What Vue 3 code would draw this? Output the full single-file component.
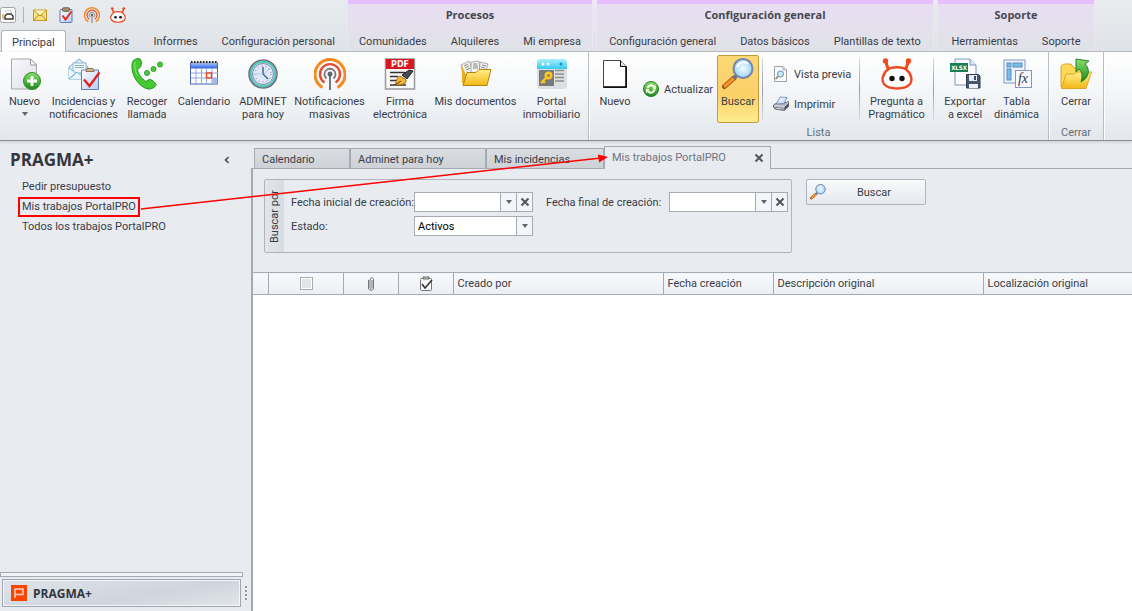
<script setup>
import { ref } from 'vue'

const quick = [
  { icon: 'mail', label: 'Correo' },
  { icon: 'clip', label: 'Tareas' },
  { icon: 'waves', label: 'Notificaciones' },
  { icon: 'robot', label: 'Pragmático' }
]
const mainTabs = ['Principal', 'Impuestos', 'Informes', 'Configuración personal']
const groups = [
  { title: 'Procesos', cls: 'g-proc', tabs: ['Comunidades', 'Alquileres', 'Mi empresa'] },
  { title: 'Configuración general', cls: 'g-conf', tabs: ['Configuración general', 'Datos básicos', 'Plantillas de texto'] },
  { title: 'Soporte', cls: 'g-sop', tabs: ['Herramientas', 'Soporte'] }
]
const mainItems = [
  { icon: 'newdoc', lines: ['Nuevo'], drop: true },
  { icon: 'incid', lines: ['Incidencias y', 'notificaciones'] },
  { icon: 'phone', lines: ['Recoger', 'llamada'] },
  { icon: 'calendar', lines: ['Calendario'] },
  { icon: 'clock', lines: ['ADMINET', 'para hoy'] },
  { icon: 'waves', lines: ['Notificaciones', 'masivas'] },
  { icon: 'pdf', lines: ['Firma', 'electrónica'], mark: 'PDF' },
  { icon: 'docs', lines: ['Mis documentos'] },
  { icon: 'portal', lines: ['Portal', 'inmobiliario'] }
]
const links = ['Pedir presupuesto', 'Mis trabajos PortalPRO', 'Todos los trabajos PortalPRO']
const docTabs = ['Calendario', 'Adminet para hoy', 'Mis incidencias']
const from = ref('')
const to = ref('')
const state = ref('Activos')
</script>

<template>
  <div class="app">
    <svg class="sprite" width="0" height="0" aria-hidden="true">
      <defs>
        <linearGradient id="gGreen" x1="0" y1="0" x2="0" y2="1"><stop offset="0" stop-color="#8ede6a" /><stop offset="1" stop-color="#178a1c" /></linearGradient>
        <linearGradient id="gPaper" x1="0" y1="0" x2="1" y2="1"><stop offset="0" stop-color="#f8f8fc" /><stop offset="1" stop-color="#dfe0ea" /></linearGradient>
        <linearGradient id="gFolder" x1="0" y1="0" x2="0" y2="1"><stop offset="0" stop-color="#fff08a" /><stop offset="1" stop-color="#f3b816" /></linearGradient>
        <linearGradient id="gBlue" x1="0" y1="0" x2="0" y2="1"><stop offset="0" stop-color="#8fb4ff" /><stop offset="1" stop-color="#2f5fd8" /></linearGradient>
        <linearGradient id="gCyan" x1="0" y1="0" x2="0" y2="1"><stop offset="0" stop-color="#a6f2fb" /><stop offset="1" stop-color="#36c8f2" /></linearGradient>
        <linearGradient id="gSky" x1="0" y1="0" x2="1" y2="1"><stop offset="0" stop-color="#fff" /><stop offset="1" stop-color="#b5ccf4" /></linearGradient>
        <radialGradient id="gLens"><stop offset="0" stop-color="#f2fcff" /><stop offset="1" stop-color="#9fd4f5" /></radialGradient>
      </defs>
      <symbol id="user" viewBox="0 0 16 16">
        <rect x="0.5" y="0.5" width="15" height="15" rx="2" fill="#fafafa" stroke="#a2a6ac" />
        <path d="M5 12V9l2-2h4l2 2v3z" fill="#fff" stroke="#383838" stroke-width="1.4" />
        <path d="M5 4l1 1M8 3v1M11 3l-1 1M12 5l-1 1" stroke="#999" fill="none" />
        <path d="M3 7v5" stroke="#f0aa33" stroke-width="1.500" />
      </symbol>
      <symbol id="mail" viewBox="0 0 16 16">
        <rect x="1.500" y="3" width="13" height="10.500" fill="#fbe27a" stroke="#c9992c" />
        <path d="M2 3.500l6 5.500 6-5.500M2 13l4.500-5M14 13l-4.500-5" fill="none" stroke="#b98a26" />
        <path d="M2.500 3.500h11L8 8z" fill="#fff6c0" />
      </symbol>
      <symbol id="clip" viewBox="0 0 16 16">
        <rect x="2" y="2.500" width="12" height="13" rx="1" fill="url(#gSky)" stroke="#5d78ad" />
        <rect x="4.500" y="0.800" width="7" height="3.500" rx="1" fill="#a98d63" stroke="#6d6250" />
        <path d="M4.500 8.500l3 4 6-8" fill="none" stroke="#e02a1d" stroke-width="2" />
      </symbol>
      <symbol id="waves" viewBox="0 0 32 32">
        <g fill="none" stroke-linecap="butt">
          <path d="M8.500 29.500A15 15 0 1 1 23.500 29.500" stroke="#f68a1f" stroke-width="3" />
          <path d="M10.500 24.500A10 10 0 1 1 21.500 24.500" stroke="#e4502f" stroke-width="2.400" />
          <path d="M12.500 20.500A5.500 5.500 0 1 1 19.500 20.500" stroke="#777" stroke-width="1.800" />
          <path d="M16 17v15" stroke="#777" stroke-width="2" />
        </g>
        <circle cx="16" cy="16" r="2.500" fill="#666" />
      </symbol>
      <symbol id="robot" viewBox="0 0 32 32">
        <path d="M7 11.500C10 8.500 22 8.500 25 11.500C30 15 32 22 29 26C26 29.500 21 30.500 16 30.500S6 29.500 3 26C0 22 2 15 7 11.500z" fill="#fff" stroke="#ee4a20" stroke-width="2.400" />
        <path d="M7.500 12L4.500 3M24.500 12L27.500 3" stroke="#ee4a20" stroke-width="3" />
        <circle cx="4.500" cy="3" r="2.700" fill="#ee4a20" /><circle cx="27.500" cy="3" r="2.700" fill="#ee4a20" />
        <circle cx="11" cy="20.500" r="2.700" fill="#111" /><circle cx="21" cy="20.500" r="2.700" fill="#111" />
      </symbol>
      <symbol id="newdoc" viewBox="0 0 32 32">
        <path d="M2.500 1h19l6 6v24h-25z" fill="url(#gPaper)" stroke="#a9a9a9" />
        <path d="M21.500 1v6h6z" fill="#fff" stroke="#999" />
        <circle cx="23" cy="23" r="8.500" fill="url(#gGreen)" stroke="#2f8b29" />
        <path d="M23 18v10M18 23h10" stroke="#fff" stroke-width="2.800" />
      </symbol>
      <symbol id="incid" viewBox="0 0 32 32">
        <path d="M1 9l10-8 9 8v12H1z" fill="#d8effb" stroke="#77afd0" />
        <rect x="5" y="5" width="13" height="10" fill="#f4f8fb" stroke="#93b5c8" />
        <path d="M7 7.500h9M7 9.500h9" stroke="#8aacb8" />
        <path d="M1 10l7 5-7 6M20 10l-7 5M1 21l8-7 8 7" fill="#e9f8ff" stroke="#77b5d8" />
        <path d="M13.500 12h17v19.500h-17z" fill="url(#gSky)" stroke="#5f7fc0" />
        <path d="M18 13.500l1-3h6l1 3z" fill="#d6b787" stroke="#8d7350" />
        <path d="M16 21.500l5.500 6.500L31.500 14.500" fill="none" stroke="#e3231b" stroke-width="2.400" />
      </symbol>
      <symbol id="phone" viewBox="0 0 32 32">
        <path d="M3 2C5 0.500 8 0 9 1C11 3 10.500 7 9.500 9L6.500 11.500C7 16 11 21 15 23.500L18 21.500C20 21 24.500 24.500 25 26.500C25 29 20 31.500 17 31C8 29 .5 18 1 8C1.200 5 1.500 3 3 2z" fill="#43ca31" stroke="#28912a" />
        <path d="M4 4c-1 6 1 11 3 14" stroke="#83ec70" fill="none" />
        <g fill="#48c935" stroke="#238c2a" stroke-width=".7"><circle cx="16" cy="15" r="2.600" /><circle cx="22.500" cy="11" r="2.600" /><circle cx="29" cy="6.500" r="2.600" /></g>
      </symbol>
      <symbol id="calendar" viewBox="0 0 32 32">
        <rect x="2.500" y="5" width="27" height="21" fill="#fff" stroke="#4262ae" />
        <rect x="3" y="6" width="26" height="4.500" fill="url(#gBlue)" />
        <path d="M3 4h27" stroke="#252525" stroke-width="2" stroke-dasharray="1.500 1.500" />
        <path d="M3 15h27M3 20h27M8 10v16M13.500 10v16M18.500 10v16M24 10v16" stroke="#8ba9e4" />
        <path d="M24.500 20h5v6h-5z" fill="#9db9ed" />
        <rect x="18.500" y="15" width="5" height="5" fill="#fff" stroke="#f04a20" stroke-width="1.500" />
      </symbol>
      <symbol id="clock" viewBox="0 0 32 32">
        <circle cx="16" cy="16" r="13.500" fill="#dbeafd" stroke="#716688" stroke-width="2.500" />
        <circle cx="16" cy="16" r="12.300" fill="none" stroke="#56c6ad" stroke-width="2.200" />
        <circle cx="16" cy="16" r="10.500" fill="none" stroke="#7d87b0" />
        <circle cx="16" cy="16" r="8" fill="none" stroke="#bd4c77" stroke-dasharray="1 3" />
        <path d="M16 9v7l5 5" fill="none" stroke="#4c5887" stroke-width="1.400" /><path d="M16 16h-7M23 10l-6 6" stroke="#b8c5dc" />
      </symbol>
      <symbol id="pdf" viewBox="0 0 32 32">
        <rect x="1.500" y="1" width="29" height="30" fill="#fafafa" stroke="#999" stroke-width="1.500" />
        <rect x="2" y="1" width="28" height="10" fill="#d9161f" />
        <path d="M6 14.500h15M6 18.500h8M6 22.500h6M6 27h16" stroke="#333" stroke-width="1.400" />
        <path d="M11 27c2-4 1-7 5-9l6 4c0 5-5 5-11 5z" fill="#f6b735" stroke="#9b651a" />
        <path d="M18 17l7-5 4 1-6 8z" fill="#4b4b50" stroke="#252525" /><path d="M11 27l6-4" stroke="#553c10" />
      </symbol>
      <symbol id="docs" viewBox="0 0 32 32">
        <path d="M2 8h8l2 3h15v12H3z" fill="#e0a51c" stroke="#a17414" />
        <g fill="#f1f1ef" stroke="#999" stroke-width=".8"><path d="M1 7l8-4 6 15-10 3z" /><path d="M11 4l8-1 1 14h-9z" /><path d="M20 4l8 2-4 14-5-2z" /></g>
        <path d="M4 8l4-2M5 10l4-2M6 12l4-2M13 6h4M13 8h5M13 10h5M22 7l4 1M21 9l4 1" stroke="#888" />
        <path d="M2 8v17l2 1 2-9z" fill="#e9ad21" />
        <path d="M7 14.500h9l3-3h12l-4 16H3z" fill="url(#gFolder)" stroke="#b58212" />
      </symbol>
      <symbol id="portal" viewBox="0 0 32 32">
        <rect x="1" y="1" width="30" height="30" rx="4" fill="#dedfe0" />
        <path d="M1 11V5a4 4 0 0 1 4-4h22a4 4 0 0 1 4 4v6z" fill="url(#gCyan)" />
        <g fill="#fff"><circle cx="7" cy="6" r="1.500" /><circle cx="12" cy="6" r="1.500" /></g><circle cx="25" cy="6" r="1.500" fill="#168fc2" />
        <rect x="3" y="12" width="15" height="16" fill="#777a7d" />
        <circle cx="12.500" cy="17.500" r="2.700" fill="none" stroke="#ffc51d" stroke-width="2.700" /><path d="M10 20l-5 5M7 23l2 2" stroke="#ffc51d" stroke-width="2.300" />
        <path d="M19 12.500h9M19 16h9M19 19.500h9M19 23h9" stroke="#8b8d90" stroke-width="1.300" />
      </symbol>
      <symbol id="blank" viewBox="0 0 32 32">
        <path d="M4.500 2.500h17l6 6v21h-23z" fill="#fff" stroke="#444" /><path d="M27 8.500v20.500h-22.500" fill="none" stroke="#000" stroke-width="1.500" /><path d="M21.500 2.500v6h6" fill="#ddd" stroke="#000" />
      </symbol>
      <symbol id="refresh" viewBox="0 0 16 16">
        <circle cx="8" cy="8" r="7.500" fill="url(#gGreen)" stroke="#247a2a" />
        <path d="M3.500 7c1-4 6-5 8-2l1.500-1v4.500H9L10.500 7C9 5 7 5 6 7zM12.500 9c-1 4-6 5-8 2L3 12V7.800h4L5.500 9c1.500 2 3.500 2 4.500 0z" fill="#f3ffe0" />
      </symbol>
      <symbol id="search" viewBox="0 0 32 32">
        <path d="M2.500 28.500L12 20" stroke="#8b4c1b" stroke-width="5" stroke-linecap="round" /><path d="M3 28L11.500 20.500" stroke="#f99328" stroke-width="3.400" stroke-linecap="round" />
        <path d="M11.500 20.500l3.500-3.500" stroke="#6d7684" stroke-width="3.500" />
        <circle cx="21" cy="10.500" r="9.500" fill="url(#gLens)" stroke="#7486ac" stroke-width="2" />
        <path d="M15 9c2-5 8-6 11-3" fill="none" stroke="#fff" stroke-width="2" />
      </symbol>
      <symbol id="preview" viewBox="0 0 16 16">
        <path d="M1.500 .5h8.500l3.500 3.500v11.500h-12z" fill="#fafbfc" stroke="#a1a1a1" /><path d="M10 .5V4h3.500" fill="none" stroke="#aaa" />
        <path d="M2.500 13l3-3" stroke="#90775c" stroke-width="1.500" /><circle cx="7.500" cy="8" r="3" fill="#c9ecfc" stroke="#708cae" />
      </symbol>
      <symbol id="printer" viewBox="0 0 16 16">
        <path d="M.5 9l4-2.500h9l2-1v4.500l-4 4.500L2 13 .5 11.500z" fill="#a6acb5" stroke="#50565e" stroke-width=".8" />
        <path d="M7 1l7 .5-3 6-7.500.5z" fill="url(#gSky)" stroke="#6681ad" stroke-width=".8" /><path d="M1.500 9.500l10 1 3.500-4" fill="none" stroke="#e8eaee" /><path d="M11.500 11v3.500l4-4V7z" fill="#4c5159" /><path d="M3 11.500l6 .5-1 1.500-5-.5z" fill="#f7fafc" stroke="#555" stroke-width=".5" />
      </symbol>
      <symbol id="excel" viewBox="0 0 32 32">
        <path d="M6 1h15l6 6v20H6z" fill="#fbfcff" stroke="#7f93c2" /><path d="M21 1v6h6" fill="#e3e9fa" stroke="#7f93c2" />
        <rect x="1" y="5" width="18" height="9" fill="#168057" />
        <path d="M17.500 16.500h12l1.500 1.500v12H17.500z" fill="#495970" stroke="#303b50" /><rect x="20" y="17" width="8" height="6" fill="#e4ebf3" /><rect x="25" y="18" width="2" height="4" fill="#394766" /><rect x="20" y="26" width="9" height="4" fill="#eff3f7" />
      </symbol>
      <symbol id="pivot" viewBox="0 0 32 32">
        <rect x="3" y="2" width="21" height="23" fill="#eff4fd" stroke="#8296bf" />
        <rect x="6" y="5" width="4" height="4" fill="#79bee7" stroke="#568dbd" /><rect x="12" y="5" width="9" height="4" fill="#79bee7" stroke="#568dbd" /><rect x="6" y="11" width="4" height="11" fill="#79bee7" stroke="#568dbd" />
        <rect x="14.500" y="12.500" width="16" height="17" fill="#f8faff" stroke="#8296bf" />
      </symbol>
      <symbol id="close" viewBox="0 0 32 32">
        <path d="M1 29V10c0-3 2-4 4-4h6l3 4h11v19z" fill="#ffd955" stroke="#d9a52c" /><path d="M6 16h9l2-2h14.500L26 30.500H1.500z" fill="url(#gFolder)" stroke="#e0a526" />
        <path d="M16 1l13 2-4 3c5 5 5 13-4 18c2-6 1-10-2-13l-3 3z" fill="url(#gGreen)" stroke="#278023" />
      </symbol>
      <symbol id="paperclip" viewBox="0 0 16 16">
        <path d="M5.500 4v8c0 3 5 3 5 0V4c0-3-3.500-3-3.500 0v7c0 2 2 2 2 0V4" fill="none" stroke="#70757c" />
      </symbol>
      <symbol id="task" viewBox="0 0 16 16">
        <rect x="2.500" y="2.500" width="11" height="12" rx="1" fill="#fafafa" stroke="#73777b" /><path d="M5 3V1h6v2z" fill="#ccc" stroke="#666" /><path d="M4 8l3 4 7-8" fill="none" stroke="#333" stroke-width="1.600" />
      </symbol>
      <symbol id="cross" viewBox="0 0 10 10"><path d="M1.500 1.500l7 7M8.500 1.500l-7 7" fill="none" stroke="#50565e" stroke-width="2" /></symbol>
      <symbol id="down" viewBox="0 0 8 8"><path d="M1 2h6L4 6z" fill="#5e646d" /></symbol>
    </svg>

    <header class="top">
      <div class="main-head">
        <div class="quick">
          <button type="button" class="q user" aria-label="Usuario"><svg><use href="#user" /></svg></button>
          <button v-for="q in quick" :key="q.icon" type="button" class="q" :aria-label="q.label"><svg><use :href="'#' + q.icon" /></svg></button>
        </div>
        <nav class="tabs">
          <button v-for="(t, i) in mainTabs" :key="t" type="button" class="tab" :class="{ on: i === 0 }">{{ t }}</button>
        </nav>
      </div>
      <div v-for="g in groups" :key="g.title" class="ctx" :class="g.cls">
        <strong>{{ g.title }}</strong>
        <nav class="tabs"><button v-for="t in g.tabs" :key="t" type="button" class="tab">{{ t }}</button></nav>
      </div>
    </header>

    <section class="ribbon">
      <div class="rgroup first">
        <button v-for="it in mainItems" :key="it.icon" type="button" class="big">
          <svg><use :href="'#' + it.icon" /><text v-if="it.mark" class="pdf-mark" x="16" y="9" text-anchor="middle">{{ it.mark }}</text></svg>
          <span v-for="l in it.lines" :key="l">{{ l }}</span>
          <svg v-if="it.drop" class="dd"><use href="#down" /></svg>
        </button>
      </div>
      <div class="rgroup lista">
        <div class="ritems">
          <button type="button" class="big"><svg><use href="#blank" /></svg><span>Nuevo</span></button>
          <button type="button" class="small refresh"><svg><use href="#refresh" /></svg>Actualizar</button>
          <button type="button" class="big hot"><svg><use href="#search" /></svg><span>Buscar</span></button>
          <i class="sep"></i>
          <div class="stack">
            <button type="button" class="small"><svg><use href="#preview" /></svg>Vista previa</button>
            <button type="button" class="small"><svg><use href="#printer" /></svg>Imprimir</button>
          </div>
          <i class="sep"></i>
          <button type="button" class="big"><svg><use href="#robot" /></svg><span>Pregunta a</span><span>Pragmático</span></button>
          <i class="sep"></i>
          <button type="button" class="big"><svg><use href="#excel" /><text class="xls-mark" x="10" y="12" text-anchor="middle">XLSX</text></svg><span>Exportar</span><span>a excel</span></button>
          <button type="button" class="big"><svg><use href="#pivot" /><text class="fx-mark" x="22" y="25" text-anchor="middle">fx</text></svg><span>Tabla</span><span>dinámica</span></button>
        </div>
        <div class="caption">Lista</div>
      </div>
      <div class="rgroup cerrar">
        <button type="button" class="big"><svg><use href="#close" /></svg><span>Cerrar</span></button>
        <div class="caption">Cerrar</div>
      </div>
    </section>

    <div class="body">
      <aside>
        <div class="side-head">
          <h1>PRAGMA+</h1>
          <button type="button" class="fold" aria-label="Contraer"><svg viewBox="0 0 8 8"><path d="M5.500 1L2.500 4l3 3" /></svg></button>
        </div>
        <nav class="links"><a v-for="(l, i) in links" :key="l" href="#" :class="{ boxed: i === 1 }">{{ l }}</a></nav>
        <div class="splitter"></div>
        <div class="side-foot">
          <button type="button" class="module">
            <svg viewBox="0 0 16 16"><rect width="16" height="16" fill="#fb4400" /><path d="M4 13V4h8v5.500H4" fill="none" stroke="#ffd5c4" stroke-width="1.500" /></svg>
            PRAGMA+
          </button>
          <div class="grip"><i></i><i></i><i></i><i></i></div>
        </div>
      </aside>

      <main>
        <nav class="doctabs">
          <button v-for="(t, i) in docTabs" :key="t" type="button" class="dtab" :class="'d' + i">{{ t }}</button>
          <div class="dtab active"><span>Mis trabajos PortalPRO</span><button type="button" aria-label="Cerrar pestaña"><svg><use href="#cross" /></svg></button></div>
        </nav>
        <div class="work">
          <div class="filters">
            <section class="panel">
              <div class="strip"><span>Buscar por</span></div>
              <form class="fields" @submit.prevent>
                <label for="from">Fecha inicial de creación:</label>
                <div class="combo"><input id="from" v-model="from" type="text" /><button type="button" aria-label="Abrir calendario inicial"><svg><use href="#down" /></svg></button><button type="button" aria-label="Borrar fecha inicial" @click="from = ''"><svg class="x"><use href="#cross" /></svg></button></div>
                <label for="to" class="second">Fecha final de creación:</label>
                <div class="combo"><input id="to" v-model="to" type="text" /><button type="button" aria-label="Abrir calendario final"><svg><use href="#down" /></svg></button><button type="button" aria-label="Borrar fecha final" @click="to = ''"><svg class="x"><use href="#cross" /></svg></button></div>
                <label for="state">Estado:</label>
                <div class="combo"><select id="state" v-model="state"><option>Activos</option></select><span class="arrow"><svg><use href="#down" /></svg></span></div>
              </form>
            </section>
            <button type="button" class="go"><svg><use href="#search" /></svg><span>Buscar</span></button>
          </div>
          <div class="grid">
            <table>
              <colgroup><col class="c15" /><col class="c75" /><col class="c55" /><col class="c55" /><col class="c210" /><col class="c110" /><col class="c210" /><col /></colgroup>
              <thead>
                <tr>
                  <th></th>
                  <th><input type="checkbox" aria-label="Seleccionar todo" /></th>
                  <th><svg aria-label="Adjuntos"><use href="#paperclip" /></svg></th>
                  <th><svg aria-label="Tarea"><use href="#task" /></svg></th>
                  <th>Creado por</th><th>Fecha creación</th><th>Descripción original</th><th>Localización original</th>
                </tr>
              </thead>
            </table>
          </div>
        </div>
      </main>
    </div>

    <svg class="arrow-note" viewBox="0 0 470 60" aria-hidden="true"><path d="M1 55L461 4" stroke="#fe0000" stroke-width="1.500" /><path d="M468 3L458 .5l1 8z" fill="#fe0000" /></svg>
  </div>
</template>

<style>
body { margin: 0; background: #e8ebef; }
</style>

<style scoped>
* { box-sizing: border-box; }
.app { position: relative; display: flex; flex-direction: column; min-height: 100vh; overflow: hidden; background: #e8ebf0; color: #393c46; font: 11px/13px Tahoma, Roboto, "DejaVu Sans", sans-serif; }
.sprite { position: absolute; }
button { font: inherit; color: inherit; background: none; border: 0; padding: 0; margin: 0; white-space: nowrap; }
svg { display: block; flex: none; }

.top { display: flex; gap: 5px; height: 52px; background: linear-gradient(#e9ecef, #dfe3e7); border-bottom: 1px solid #b3b6bb; }
.main-head { width: 343px; display: flex; flex-direction: column; justify-content: space-between; }
.quick { display: flex; gap: 10px; padding-top: 7px; }
.q svg { width: 16px; height: 16px; }
.q.user { padding-right: 7px; border-right: 1px solid #b0b3b8; margin-right: -2px; }
.tabs { display: flex; height: 22px; flex: none; margin-bottom: -1px; }
.tab { padding: 0 12px; line-height: 23px; }
.tab.on { background: #fff; border: 1px solid #b3b6bb; border-bottom: 0; border-radius: 3px 3px 0 0; padding: 0 10px; margin-left: 1px; }
.ctx { display: flex; flex-direction: column; justify-content: space-between; border-top: 4px solid #e5bfff; background: linear-gradient(#e8def2, #e0e3e7); box-shadow: -1px 0 #eee3f7, 1px 0 #eee3f7; text-align: center; }
.ctx strong { padding-top: 4px; color: #44464f; font-family: Tahoma, "Open Sans", sans-serif; }
.ctx .tabs { justify-content: center; }
.g-proc { width: 244px; }
.g-conf { width: 336px; }
.g-sop { width: 156px; }

.ribbon { display: flex; height: 89px; background: linear-gradient(#fff, #f4f6f8 45%, #e3e7ec); border-bottom: 1px solid #8b8f94; box-shadow: 0 1px 3px #c8cbd0; }
.rgroup { border-right: 1px solid #b9bec5; box-shadow: 1px 0 #fff; padding-top: 6px; }
.big { display: flex; flex-direction: column; align-items: center; justify-content: flex-start; }
.big svg { width: 32px; height: 32px; margin-bottom: 5px; }
.big svg.dd { width: 8px; height: 8px; margin-top: 2px; }
.pdf-mark { font: bold 8px "DejaVu Sans", sans-serif; fill: #fff; }
.xls-mark { font: bold 6px "DejaVu Sans Condensed", "DejaVu Sans", sans-serif; fill: #fff; }
.fx-mark { font: italic 14px "Liberation Serif", serif; fill: #2f364f; }
.first { width: 589px; display: grid; grid-template-columns: 31px 65px 40px 52px 44px 67px 52px 77px 53px; column-gap: 11px; padding-left: 9px; justify-content: start; justify-items: center; align-items: start; }
.lista { width: 460px; display: flex; flex-direction: column; justify-content: space-between; }
.ritems { display: grid; grid-template-columns: 32px 66px 35px 1px 76px 1px 53px 1px 42px 41px; column-gap: 10px; padding-left: 10px; justify-items: center; align-items: start; }
.small { display: flex; align-items: center; gap: 5px; }
.small svg { width: 16px; height: 16px; }
.ritems .refresh { margin-top: 23px; justify-self: start; margin-left: 2px; }
.ritems .hot { width: 42px; height: 68px; margin-top: -3px; justify-self: start; padding-top: 2px; border: 1px solid #c79b3a; border-radius: 2px; background: linear-gradient(#fbd877, #fbd067 60%, #ffed8e); }
.sep { width: 1px; height: 62px; background: linear-gradient(#d8dbdf, #999da3, #d8dbdf); }
.stack { display: grid; gap: 14px; padding-top: 8px; justify-self: start; }
.caption { text-align: center; color: #666c7b; line-height: 13px; padding-bottom: 1px; }
.cerrar { width: 55px; display: flex; flex-direction: column; justify-content: space-between; }

.body { flex: 1; display: flex; }
aside { width: 251px; flex: none; display: flex; flex-direction: column; }
.side-head { display: flex; justify-content: space-between; align-items: center; padding: 8px 20px 0 10px; height: 30px; }
h1 { margin: 0; font: bold 17px/20px Tahoma, "Open Sans", sans-serif; color: #33363d; }
.fold svg { width: 8px; height: 8px; fill: none; stroke: #444; stroke-width: 1.5; }
.links { display: flex; flex-direction: column; align-items: flex-start; padding: 6px 18px; flex: 1; }
.links a { color: inherit; text-decoration: none; line-height: 16px; border: 2px solid transparent; padding: 0 4px 0 2px; white-space: nowrap; }
.links .boxed { border-color: #fe0000; width: 122px; }
.splitter { height: 5px; width: 243px; border: 1px solid #a4abb4; background: #f0f2f5; margin-bottom: 2px; }
.side-foot { display: flex; align-items: center; gap: 4px; padding: 0 2px 4px; }
.module { width: 239px; height: 28px; display: flex; align-items: center; gap: 6px; padding-left: 8px; border: 1px solid #9fa6af; box-shadow: inset 0 0 0 1px #f3f5f8; background: linear-gradient(170deg, #dfe4ea, #cfd5dd 60%, #e2e6eb); font-family: Tahoma, "Open Sans", sans-serif; font-size: 12px; font-weight: bold; color: #33363d; }
.module svg { width: 16px; height: 16px; }
.grip { display: grid; gap: 2px; }
.grip i { width: 2px; height: 2px; background: #9299a4; }

main { flex: 1; min-width: 0; display: flex; flex-direction: column; }
.doctabs { display: flex; align-items: flex-end; height: 28px; padding-left: 3px; border-bottom: 1px solid #a4abb5; }
.dtab { height: 20px; border: 1px solid #a4abb5; border-bottom: 0; background: linear-gradient(#dadde1, #ced2d7); text-align: left; padding-left: 7px; line-height: 22px; }
.d0 { width: 96px; }
.d1 { width: 136px; }
.d2 { width: 118px; }
.dtab.active { width: 167px; margin-bottom: -1px; height: 23px; background: #e8ebf0; color: #6e7480; display: flex; align-items: center; justify-content: space-between; padding: 0 6px 0 7px; }
.active svg { width: 10px; height: 10px; }
.work { flex: 1; display: flex; flex-direction: column; border-left: 2px solid #a4abb5; }
.filters { display: flex; gap: 14px; align-items: flex-start; padding: 10px 11px 19px; }
.panel { display: flex; width: 528px; height: 74px; border: 1px solid #b0b5bd; border-radius: 2px; }
.strip { width: 19px; flex: none; display: flex; align-items: center; justify-content: center; background: linear-gradient(90deg, #e2e5e9, #d8dce1); }
.strip span { writing-mode: vertical-rl; transform: rotate(180deg); }
.fields { display: grid; grid-template-columns: 123px 119px 136px 119px; grid-auto-rows: 20px; row-gap: 4px; align-items: center; padding: 12px 0 0 7px; align-content: start; white-space: nowrap; }
.second { padding-left: 13px; }
.combo { display: flex; height: 20px; border: 1px solid #a4abb5; background: #fff; }
.combo input, .combo select { flex: 1; min-width: 0; width: 0; border: 0; padding: 0 3px; margin: 0; font: inherit; background: #fff; color: #000; appearance: none; border-radius: 0; outline: 0; }
.combo button, .arrow { width: 16px; border-left: 1px solid #a4abb5; background: #f3f5f8; display: flex; align-items: center; justify-content: center; }
.combo svg { width: 8px; height: 8px; }
.combo svg.x { width: 10px; height: 10px; }
.go { display: flex; align-items: center; width: 120px; height: 26px; padding: 0 3px; border: 1px solid #b0b5bd; border-radius: 2px; background: linear-gradient(#f8f9fb, #e6e9ee); }
.go svg { width: 16px; height: 16px; }
.go span { flex: 1; }
.grid { flex: 1; background: #fff; overflow: hidden; }
table { width: 100%; table-layout: fixed; border-collapse: collapse; }
.c15 { width: 15px; }
.c55 { width: 55px; }
.c75 { width: 75px; }
.c110 { width: 110px; }
.c210 { width: 210px; }
th { height: 22px; padding: 0 3px 0 4px; font-weight: normal; text-align: left; white-space: nowrap; background: linear-gradient(#f7f9fb, #ebeff4); border: 1px solid #a4abb5; border-left: 0; }
th:last-child { border-right: 0; }
th svg { width: 16px; height: 16px; margin: 0 auto; }
th input { appearance: none; display: block; width: 13px; height: 13px; margin: 0 auto; border: 1px solid #a9adb2; background: #e3e4e6; box-shadow: inset 0 0 0 1px #fff; }

.arrow-note { position: absolute; left: 140px; top: 154px; width: 470px; height: 60px; fill: none; pointer-events: none; }
</style>
